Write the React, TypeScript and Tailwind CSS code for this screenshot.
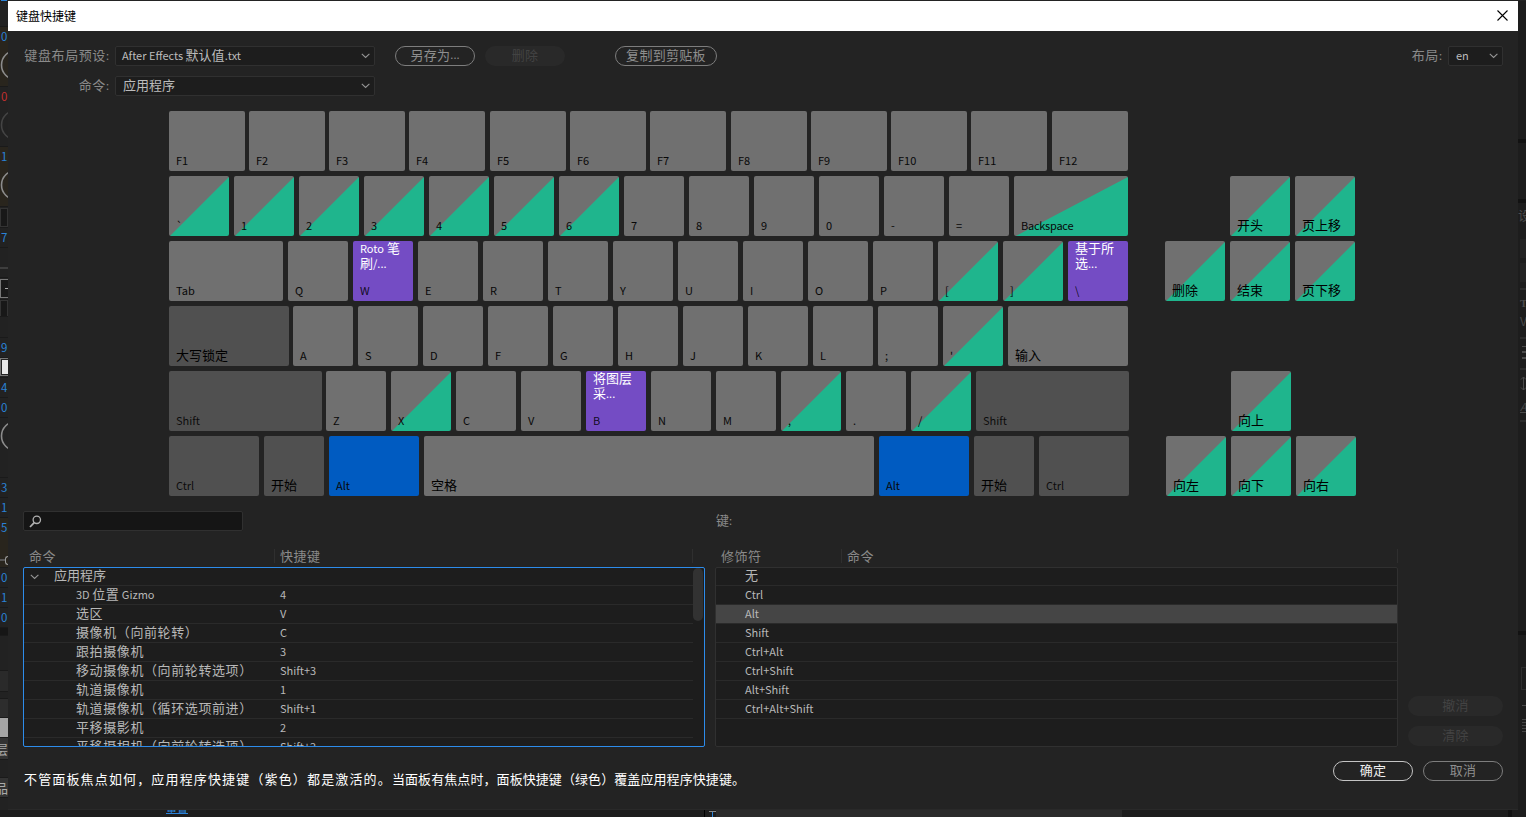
import type { ReactNode } from 'react';

type Kind = 'plain' | 'dark' | 'green' | 'purple' | 'blue';
type KeyDef = { t: string; w?: string; k?: Kind; ml?: string; cmd?: ReactNode };

const W60 = 'w-[60px]';

const fills: Record<Kind, string> = {
  plain: 'bg-[#707070]',
  dark: 'bg-[#505050]',
  green: 'bg-[linear-gradient(to_bottom_right,#707070_50.4%,#1fb58d_51.2%)]',
  purple: 'bg-[#744cc4]',
  blue: 'bg-[#005bc1]',
};

const plain = (chars: string): KeyDef[] => chars.split('').map((t) => ({ t }));
const green = (chars: string): KeyDef[] => chars.split('').map((t) => ({ t, k: 'green' as Kind }));

const fGaps = ['ml-0', 'ml-[4px]', 'ml-[4px]', 'ml-[4px]', 'ml-[5px]', 'ml-[4px]', 'ml-[4px]', 'ml-[5px]', 'ml-[4px]', 'ml-[4px]', 'ml-[4px]', 'ml-[5px]'];

const rows: KeyDef[][] = [
  fGaps.map((ml, i) => ({ t: `F${i + 1}`, w: 'w-[76px]', ml })),
  [...green('`123456'), ...plain('7890-='), { t: 'Backspace', w: 'w-[114px]', k: 'green' }],
  [
    { t: 'Tab', w: 'w-[114px]' },
    ...plain('Q'),
    { t: 'W', k: 'purple', cmd: <><Lat>Roto</Lat> 笔<br />刷<Lat>/...</Lat></> },
    ...plain('ERTYUIOP'),
    ...green('[]'),
    { t: '\\', k: 'purple', cmd: <>基于所<br />选<Lat>...</Lat></> },
  ],
  [
    { t: '大写锁定', w: 'w-[120px]', k: 'dark' },
    { t: 'A', ml: 'ml-[4px]' },
    ...plain('SDFGHJKL;'),
    ...green("'"),
    { t: '输入', w: 'w-[120px]' },
  ],
  [
    { t: 'Shift', w: 'w-[153px]', k: 'dark' },
    { t: 'Z', ml: 'ml-[4px]' },
    ...green('X'),
    ...plain('CV'),
    { t: 'B', k: 'purple', cmd: <>将图层<br />采<Lat>...</Lat></> },
    ...plain('NM'),
    ...green(','),
    ...plain('.'),
    ...green('/'),
    { t: 'Shift', w: 'w-[153px]', k: 'dark' },
  ],
  [
    { t: 'Ctrl', w: 'w-[90px]', k: 'dark' },
    { t: '开始', k: 'dark' },
    { t: 'Alt', w: 'w-[90px]', k: 'blue' },
    { t: '空格', w: 'w-[450px]' },
    { t: 'Alt', w: 'w-[90px]', k: 'blue' },
    { t: '开始', k: 'dark' },
    { t: 'Ctrl', w: 'w-[90px]', k: 'dark' },
  ],
];

function Lat({ children }: { children: ReactNode }) {
  return <span className="text-[11px] leading-none tracking-normal">{children}</span>;
}

/* Latin runs are set slightly smaller than Chinese ones. */
function Mixed({ text }: { text: string }) {
  return (
    <>
      {text.split(/([\x20-\x7e]+)/).map((s, i) => (i % 2 ? <Lat key={i}>{s}</Lat> : s))}
    </>
  );
}

function Key({ def, first }: { def: KeyDef; first: boolean }) {
  const ml = first ? 'ml-0' : def.ml ?? 'ml-[5px]';
  const cjk = def.t.charCodeAt(0) > 255;
  return (
    <div className={`flex h-[60px] shrink-0 flex-col justify-between overflow-hidden rounded-[2px] pl-[7px] ${ml} ${def.w ?? W60} ${fills[def.k ?? 'plain']}`}>
      <div className="-mt-px h-[32px] whitespace-nowrap text-[13px] leading-[15px] text-white">{def.cmd}</div>
      {cjk ? (
        <div className="mb-[3px] h-[16px] text-[13px] leading-[16px] text-black">{def.t}</div>
      ) : (
        <div className={`mb-[3px] h-[16px] text-[11px] leading-[16px] ${def.t === 'Backspace' ? 'tracking-[-0.25px]' : ''} ${def.k === 'dark' || def.k === 'purple' ? 'text-black/85' : 'text-[#080808]'}`}>{def.t}</div>
      )}
    </div>
  );
}

function KeyRow({ keys }: { keys: KeyDef[] }) {
  return (
    <div className="flex">
      {keys.map((k, i) => (
        <Key key={i} def={k} first={i === 0} />
      ))}
    </div>
  );
}

function Chevron() {
  return (
    <svg width="10" height="6" viewBox="0 0 10 6" fill="none" stroke="#969696" strokeWidth="1.1">
      <path d="M1.8 0.8 L5.6 4.4 L9.4 0.8" />
    </svg>
  );
}

function Select({ w, children }: { w: string; children: ReactNode }) {
  return (
    <div className={`flex h-[20px] shrink-0 items-center justify-between rounded-[2px] border border-[#303030] bg-[#1d1d1d] pl-[6px] pr-[4px] text-[13px] leading-[18px] text-[#bcbcbc] ${w}`}>
      <span className="whitespace-nowrap pb-[2px] leading-[16px]">{children}</span>
      <Chevron />
    </div>
  );
}

function Button({ cls, children }: { cls: string; children: ReactNode }) {
  return <button className={`flex h-[20px] shrink-0 items-center justify-center whitespace-nowrap rounded-[10px] pb-[3px] text-[13px] leading-[16px] tracking-[0.3px] ${cls}`}>{children}</button>;
}

const outline = 'border border-[#7d7d7d] text-[#8e8e8e]';
const disabled = 'bg-[#292929] text-[#434343]';
const label = 'whitespace-nowrap pb-[2px] text-[13px] leading-[16px] tracking-[0.6px] text-[#8a8a8a]';

const commands: [string, string][] = [
  ['3D 位置 Gizmo', '4'],
  ['选区', 'V'],
  ['摄像机（向前轮转）', 'C'],
  ['跟拍摄像机', '3'],
  ['移动摄像机（向前轮转选项）', 'Shift+3'],
  ['轨道摄像机', '1'],
  ['轨道摄像机（循环选项前进）', 'Shift+1'],
  ['平移摄影机', '2'],
  ['平移摄相机（向前轮转选项）', 'Shift+2'],
];

const modifiers = ['Ctrl', 'Alt', 'Shift', 'Ctrl+Alt', 'Ctrl+Shift', 'Alt+Shift', 'Ctrl+Alt+Shift'];

function Dial({ dim }: { dim?: boolean }) {
  return (
    <svg width="8" height="32" viewBox="0 0 8 32" fill="none">
      <circle cx="16" cy="16" r="14.5" stroke={dim ? '#444' : '#8c8c8c'} strokeWidth="1.6" />
    </svg>
  );
}

/* Slice of the effect controls panel that shows left of the dialog. */
type Seg = { h: string; bg?: string; t?: string; dial?: 'on' | 'dim'; red?: boolean; node?: ReactNode };
const leftSegs: Seg[] = [
  { h: 'h-[26px]' },
  { h: 'h-[60px]', bg: 'bg-[#29251d]', t: '0', dial: 'on' },
  { h: 'h-[60px]', t: '0', dial: 'dim', red: true },
  { h: 'h-[60px]', bg: 'bg-[#29251d]', t: '1', dial: 'on' },
  { h: 'h-[21px]', node: <div className="mt-[1px] h-[19px] w-[8px] border border-[#333] bg-[#181818]" /> },
  { h: 'h-[20px]', t: '7' },
  { h: 'h-[30px]', node: <div className="mt-[19px] h-[2px] bg-[#3e3e3e]" /> },
  { h: 'h-[22px]', node: <div className="mt-px flex h-[19px] w-[9px] items-center justify-end border border-[#777] bg-[#191919]"><div className="h-px w-[3px] bg-[#aaa]" /></div> },
  { h: 'h-[17px]', node: <div className="h-[17px] border border-[#333] bg-[#181818]" /> },
  { h: 'h-[21px]' },
  { h: 'h-[20px]', t: '9' },
  { h: 'h-[20px]', node: <div className="flex h-[18px] border border-r-0 border-[#777] bg-[#232323] py-px pl-px"><div className="w-[6px] bg-[#e8e8e8]" /></div> },
  { h: 'h-[20px]', t: '4' },
  { h: 'h-[20px]', t: '0' },
  { h: 'h-[60px]', node: <div className="mt-[2px]"><Dial /></div> },
  { h: 'h-[20px]', t: '3' },
  { h: 'h-[20px]', t: '1' },
  { h: 'h-[50px]', bg: 'bg-[#29251d]', t: '5', node: <div className="mt-[17px] flex h-[10px] items-center"><div className="h-[2px] w-[5px] bg-[#555]" /><div className="h-[9px] w-[3px] rounded-l-full border border-r-0 border-[#999]" /></div> },
  { h: 'h-[20px]', t: '0' },
  { h: 'h-[20px]', t: '1' },
  { h: 'h-[20px]', t: '0' },
  { h: 'h-[8px]', bg: 'bg-[#161616]' },
  { h: 'h-[35px]' },
  { h: 'h-[21px]', bg: 'bg-[#2a2a2a]' },
  { h: 'h-[7px]' },
  { h: 'h-[19px]', bg: 'bg-[#2d2d2d]' },
  { h: 'h-[20px]', bg: 'bg-[#a5a5a5]' },
  { h: 'h-[22px]', bg: 'bg-[#333]', node: <div className="-ml-[5px] w-[13px] text-[13px] leading-[22px] text-[#aaa]">层</div> },
  { h: 'h-[18px]' },
  { h: 'h-[20px]', bg: 'bg-[#333]', node: <div className="-ml-[5px] w-[13px] text-[13px] leading-[20px] text-[#aaa]">品</div> },
];

function LeftRail() {
  return (
    <div className="w-[8px] shrink-0 overflow-hidden bg-[#222]">
      {leftSegs.map((s, i) => (
        <div key={i} className={`overflow-hidden border-b border-[#1a1a1a] ${s.h} ${s.bg ?? 'bg-[#222]'}`}>
          {s.t && <div className={`h-[20px] pl-px text-[11.5px] leading-[19px] ${s.red ? 'text-[#c03030]' : 'text-[#2a82d8]'}`}>{s.t}</div>}
          {s.dial && <div className="mt-[2px]"><Dial dim={s.dial === 'dim'} /></div>}
          {s.node}
        </div>
      ))}
    </div>
  );
}

/* Slice of the character and paragraph panels right of the dialog. */
function RightRail() {
  return (
    <div className="flex w-[8px] shrink-0 flex-col overflow-hidden bg-[#1d1d1d] text-[#4a4a4a]">
      <div className="h-[138px] shrink-0" />
      <div className="h-[4px] shrink-0 bg-[#121212]" />
      <div className="h-[56px] shrink-0" />
      <div className="h-[4px] shrink-0 bg-[#121212]" />
      <div className="mt-[4px] h-[20px] shrink-0 whitespace-nowrap text-[13px] leading-[16px]">设</div>
      <div className="ml-[2px] mt-[12px] h-[19px] shrink-0 bg-[#232323]" />
      <div className="ml-[2px] mt-[5px] h-[19px] shrink-0 bg-[#232323]" />
      <div className="ml-[2px] mt-[6px] h-[2px] shrink-0 bg-[#2c2c2c]" />
      <div className="ml-[2px] mt-[5px] h-[16px] shrink-0 font-['Liberation_Serif',serif] text-[11px] font-bold leading-[16px]">T</div>
      <div className="ml-[2px] mt-[2px] h-[16px] shrink-0 text-[12px] leading-[16px]">V</div>
      <div className="ml-[2px] mt-[8px] h-[2px] shrink-0 bg-[#2c2c2c]" />
      <div className="ml-[4px] mt-[7px] flex h-[13px] shrink-0 flex-col justify-between"><div className="h-px bg-[#4a4a4a]" /><div className="h-[2px] bg-[#4a4a4a]" /><div className="h-[2px] bg-[#4a4a4a]" /></div>
      <div className="ml-[2px] mt-[9px] h-[2px] shrink-0 bg-[#2c2c2c]" />
      <svg className="ml-[2px] mt-[6px] shrink-0" width="6" height="15" viewBox="0 0 6 15" fill="none" stroke="#4a4a4a">
        <path d="M3.5 1 V14 M1 3.5 L3.5 1 L6 3.5 M1 11.5 L3.5 14 L6 11.5" />
      </svg>
      <div className="ml-[2px] mt-[6px] h-[18px] shrink-0 text-[11px] italic leading-[18px] underline">A</div>
      <div className="ml-[2px] mt-[5px] h-[2px] shrink-0 bg-[#2c2c2c]" />
      <div className="mt-[209px] h-[4px] shrink-0 bg-[#121212]" />
      <div className="ml-[3px] mt-[32px] h-[23px] w-[8px] shrink-0 border border-[#2e2e2e]" />
      <div className="ml-[4px] mt-[15px] h-px shrink-0 bg-[#4a4a4a]" />
      <div className="ml-[4px] mt-[13px] flex h-[13px] shrink-0 flex-col justify-between"><div className="h-px bg-[#444]" /><div className="h-px bg-[#444]" /><div className="h-px bg-[#444]" /><div className="h-px bg-[#444]" /><div className="h-px bg-[#444]" /></div>
    </div>
  );
}

function Divider() {
  return <div className="h-[14px] w-px shrink-0 bg-[#2f2f2f]" />;
}

export default function App() {
  return (
    <div className="flex h-[817px] w-[1526px] flex-col overflow-hidden bg-[#1d1d1d] font-['Noto_Sans_CJK_SC',sans-serif]">
      <div className="flex h-px shrink-0 bg-[#232323]">
        <div className="ml-px w-[6px] bg-[#2a82d8]" />
      </div>
      <div className="flex h-[809px] shrink-0">
        <LeftRail />
        <div className="flex w-[1510px] shrink-0 flex-col border-b border-[#292929] bg-[#232323]">
          <div className="flex h-[30px] shrink-0 items-center justify-between bg-white pl-[8px] pr-[10px] text-[12px] text-black">
            <span className="leading-[30px]">键盘快捷键</span>
            <svg className="-mt-[2px]" width="11" height="11" viewBox="0 0 11 11" fill="none" stroke="#000" strokeWidth="1.1">
              <path d="M0.5 0.5 L10.5 10.5 M10.5 0.5 L0.5 10.5" />
            </svg>
          </div>

          <div className="mt-[15px] flex h-[20px] items-center">
            <span className={`w-[101px] text-right ${label}`}>键盘布局预设<Lat>:</Lat></span>
            <div className="ml-[6px]"><Select w="w-[260px]"><Mixed text="After Effects 默认值.txt" /></Select></div>
            <Button cls={`ml-[20px] w-[80px] ${outline}`}>另存为<Lat>...</Lat></Button>
            <Button cls={`ml-[10px] w-[80px] ${disabled}`}>删除</Button>
            <Button cls={`ml-[50px] w-[102px] ${outline}`}>复制到剪贴板</Button>
            <span className={`ml-auto mr-[6px] ${label}`}>布局<Lat>:</Lat></span>
            <div className="mr-[15px]"><Select w="w-[55px]"><span className="pl-px"><Lat>en</Lat></span></Select></div>
          </div>
          <div className="mt-[10px] flex h-[20px] items-center">
            <span className={`w-[101px] text-right ${label}`}>命令<Lat>:</Lat></span>
            <div className="ml-[6px]"><Select w="w-[260px]"><span className="pl-px">应用程序</span></Select></div>
          </div>

          <div className="mt-[15px] flex h-[385px] shrink-0 pl-[161px]">
            <div className="flex w-[960px] shrink-0 flex-col gap-[5px]">
              {rows.map((r, i) => (
                <KeyRow key={i} keys={r} />
              ))}
            </div>
            <div className="ml-[36px] flex flex-col gap-[5px] pt-[65px]">
              <div className="pl-[65px]"><KeyRow keys={[{ t: '开头', k: 'green' }, { t: '页上移', k: 'green' }]} /></div>
              <KeyRow keys={[{ t: '删除', k: 'green' }, { t: '结束', k: 'green' }, { t: '页下移', k: 'green' }]} />
              <div className="h-[60px]" />
              <div className="pl-[66px]"><KeyRow keys={[{ t: '向上', k: 'green' }]} /></div>
              <div className="pl-px"><KeyRow keys={[{ t: '向左', k: 'green' }, { t: '向下', k: 'green' }, { t: '向右', k: 'green' }]} /></div>
            </div>
          </div>

          <div className="mt-[15px] flex h-[236px] shrink-0 pl-[15px]">
            <div className="flex w-[682px] shrink-0 flex-col">
              <div className="flex h-[20px] w-[220px] shrink-0 items-center rounded-[2px] border border-[#303030] bg-[#151515] pl-[5px]">
                <svg width="13" height="13" viewBox="0 0 13 13" fill="none" stroke="#b0b0b0">
                  <circle cx="7.8" cy="4.8" r="3.7" strokeWidth="1.3" />
                  <path d="M5.2 7.6 L1 12" strokeWidth="1.8" />
                </svg>
              </div>
              <div className="mt-[15px] flex h-[20px] shrink-0 items-center text-[13px] leading-[18px] tracking-[0.5px] text-[#8a8a8a]">
                <span className="w-[251px] pl-[6px]">命令</span>
                <Divider />
                <span className="w-[417px] pl-[5px]">快捷键</span>
                <Divider />
              </div>
              <div className="mt-px flex h-[180px] shrink-0 overflow-hidden rounded-[2px] border border-[#2d8ceb] bg-[#1d1d1d] text-[13px] text-[#b8b8b8]">
                <div className="w-[669px] shrink-0">
                  <div className="flex h-[18px] items-center border-b border-[#2a2a2a] pl-[5px]">
                    <Chevron />
                    <span className="ml-[15px] pb-[3px] leading-[14px]">应用程序</span>
                  </div>
                  {commands.map(([name, key]) => (
                    <div key={name} className="flex h-[19px] items-center border-b border-[#2a2a2a]">
                      <span className="w-[256px] shrink-0 whitespace-nowrap pb-[2px] pl-[52px] leading-[16px] tracking-[0.6px]"><Mixed text={name} /></span>
                      <span className="pb-[2px] text-[11px] leading-[16px]">{key}</span>
                    </div>
                  ))}
                </div>
                <div className="h-[53px] w-[10px] rounded-[5px] bg-[#323232]" />
              </div>
            </div>

            <div className="ml-[10px] flex w-[683px] shrink-0 flex-col">
              <div className="h-[20px] pl-px text-[13px] leading-[18px] text-[#8a8a8a]">键<Lat>:</Lat></div>
              <div className="mt-[15px] flex h-[20px] shrink-0 items-center text-[13px] leading-[18px] tracking-[0.5px] text-[#8a8a8a]">
                <span className="w-[126px] pl-[6px]">修饰符</span>
                <Divider />
                <span className="w-[555px] pl-[5px]">命令</span>
                <Divider />
              </div>
              <div className="mt-px h-[180px] shrink-0 overflow-hidden rounded-[2px] border border-[#303030] bg-[#1d1d1d] text-[#b8b8b8]">
                <div className="h-[18px] border-b border-[#2a2a2a] pl-[29px] text-[13px] leading-[14px]">无</div>
                {modifiers.map((m) => (
                  <div key={m} className={`h-[19px] border-b border-[#2a2a2a] pl-[29px] text-[11px] leading-[16px] ${m === 'Alt' ? 'bg-[#454545]' : ''}`}>{m}</div>
                ))}
              </div>
            </div>

            <div className="ml-[10px] flex w-[95px] shrink-0 flex-col justify-end gap-[10px] pb-px">
              <Button cls={`w-[95px] ${disabled}`}>撤消</Button>
              <Button cls={`w-[95px] ${disabled}`}>清除</Button>
            </div>
          </div>

          <div className="mt-[14px] flex h-[20px] shrink-0 items-center">
            <span className="mt-[15px] whitespace-nowrap pl-[16px] text-[13px] leading-[18px] text-white">
              <span className="tracking-[1.15px]">不管面板焦点如何，应用程序快捷键（紫色）都是激活的。</span><span className="tracking-[0.08px]">当面板有焦点时，面板快捷键（绿色）覆盖应用程序快捷键。</span>
            </span>
            <Button cls="ml-auto w-[80px] border border-[#c4c4c4] text-[#efefef]">确定</Button>
            <Button cls={`ml-[10px] mr-[15px] w-[80px] ${outline}`}>取消</Button>
          </div>
        </div>
        <RightRail />
      </div>
      <div className="flex h-[7px] shrink-0 overflow-hidden bg-[#1d1d1d]">
        <div className="ml-[166px] h-[4px] w-[22px] overflow-hidden whitespace-nowrap border-b border-[#2a82d8] text-[11px] leading-[0px] text-[#2a82d8]">重置</div>
        <div className="ml-[516px] w-px bg-black" />
        <div className="ml-[4px] flex w-[7px] flex-col items-center">
          <div className="mt-px h-px w-[7px] bg-[#888]" />
          <div className="h-[5px] w-px bg-[#2a82d8]" />
        </div>
        <div className="w-[406px] bg-[#2a2a2a]" />
        <div className="ml-[386px] w-[4px] bg-[#121212]" />
      </div>
    </div>
  );
}
